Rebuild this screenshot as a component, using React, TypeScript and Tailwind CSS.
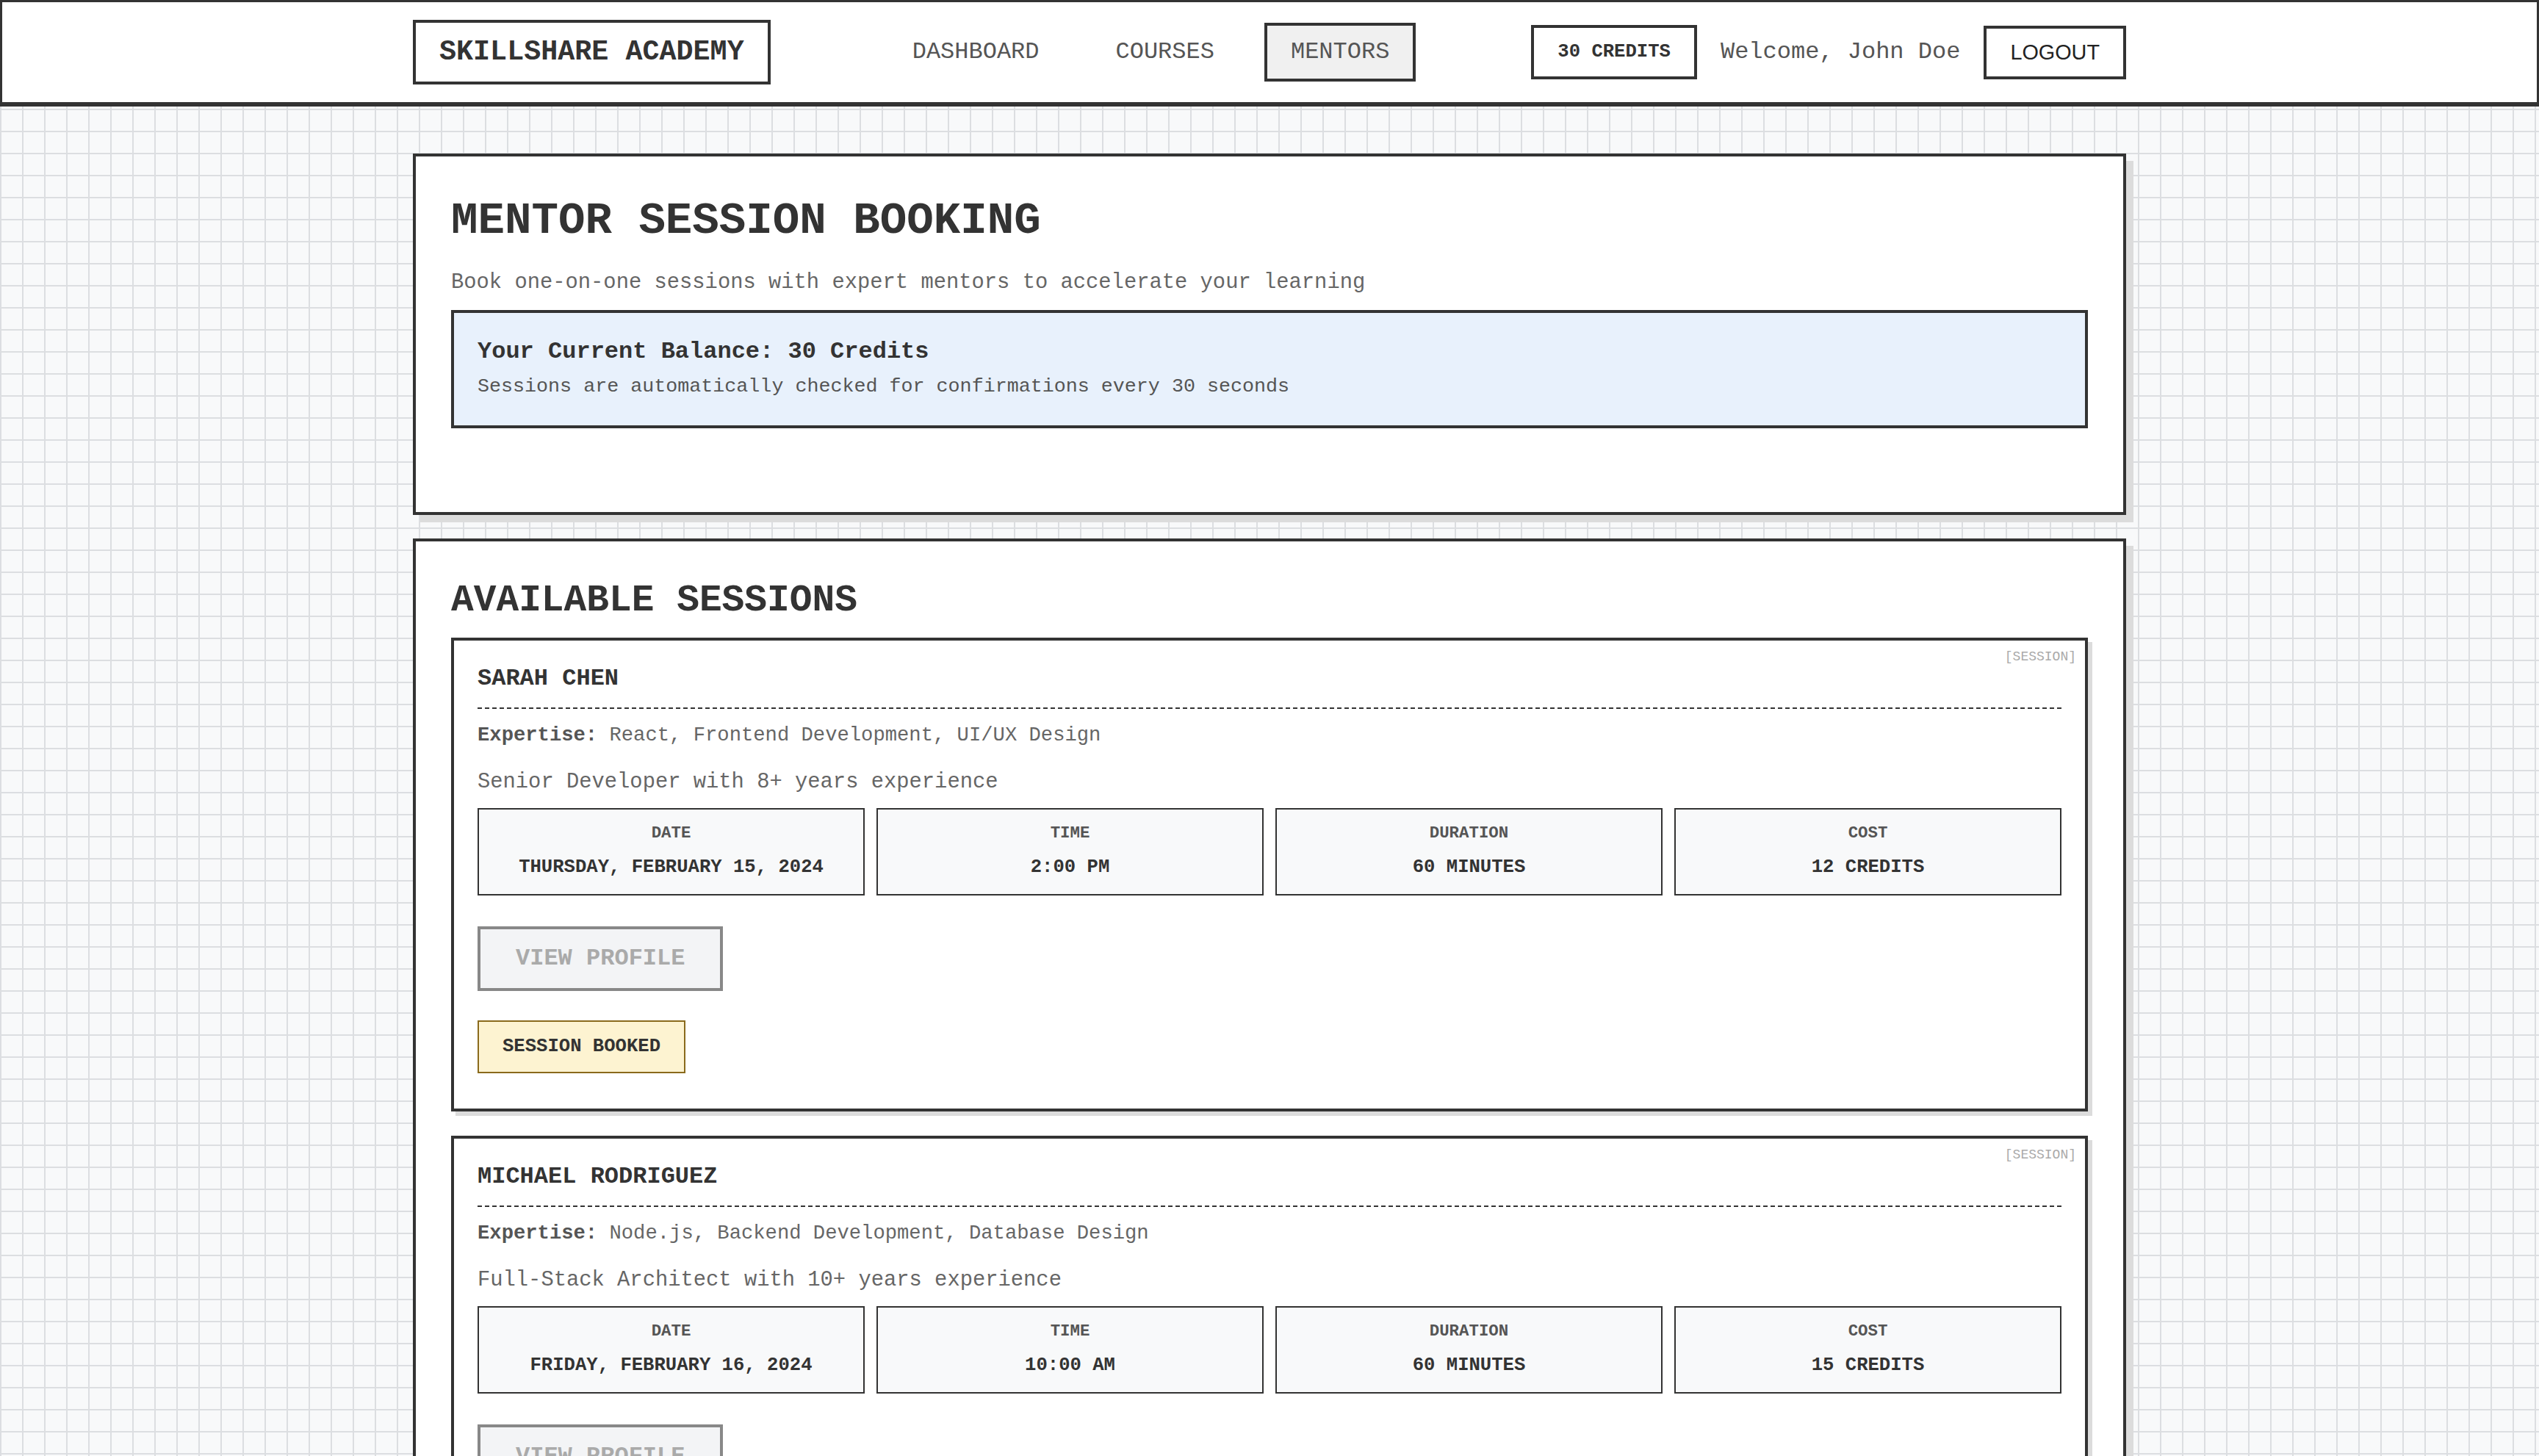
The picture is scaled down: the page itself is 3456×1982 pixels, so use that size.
const sessions = [
  {
    name: "SARAH CHEN",
    expertise: "React, Frontend Development, UI/UX Design",
    bio: "Senior Developer with 8+ years experience",
    date: "THURSDAY, FEBRUARY 15, 2024",
    time: "2:00 PM",
    duration: "60 MINUTES",
    cost: "12 CREDITS",
    booked: true,
  },
  {
    name: "MICHAEL RODRIGUEZ",
    expertise: "Node.js, Backend Development, Database Design",
    bio: "Full-Stack Architect with 10+ years experience",
    date: "FRIDAY, FEBRUARY 16, 2024",
    time: "10:00 AM",
    duration: "60 MINUTES",
    cost: "15 CREDITS",
    booked: false,
  },
]

function Detail({ label, value }: { label: string; value: string }) {
  return (
    <div className="h-[119px] border-2 border-[#333] bg-[#f8f9fa] pt-[18px] text-center">
      <div className="text-[22.4px] leading-[28px] font-bold text-[#555]">{label}</div>
      <div className="mt-[17px] text-[25.6px] leading-[32px] font-bold text-[#333]">{value}</div>
    </div>
  )
}

function SessionCard({ s }: { s: (typeof sessions)[number] }) {
  return (
    <div className="relative bg-white border-4 border-[#333] shadow-[6px_6px_0_#dcdcdc] px-[32px] pt-[32px] pb-[48px]">
      <span className="absolute top-[12px] right-[12px] text-[18px] leading-[20px] text-[#aaa]">[SESSION]</span>

      {/* Mentor header */}
      <div className="border-b-2 border-dashed border-[#333] pb-[19px]">
        <h3 className="text-[32px] leading-[40px] font-bold">{s.name}</h3>
      </div>
      <p className="mt-[17.5px] text-[27.2px] leading-[36px] text-[#666]">
        <span className="font-bold text-[#555]">Expertise:</span> {s.expertise}
      </p>
      <p className="mt-[26px] text-[28.8px] leading-[40px] text-[#666]">{s.bio}</p>

      {/* Session details */}
      <div className="mt-[15.5px] grid grid-cols-4 gap-[16px]">
        <Detail label="DATE" value={s.date} />
        <Detail label="TIME" value={s.time} />
        <Detail label="DURATION" value={s.duration} />
        <Detail label="COST" value={s.cost} />
      </div>

      <div className="mt-[42px]">
        <button className="h-[88px] px-[48px] border-4 border-[#888] bg-[#f3f4f6] text-[#aaa] text-[32px] leading-[40px] font-bold">
          VIEW PROFILE
        </button>
      </div>

      {s.booked ? (
        <div className="mt-[40px] inline-flex h-[72px] items-center px-[32px] border-2 border-[#8a6a1c] bg-[#fdf3d1] text-[25.6px] leading-[32px] font-bold">
          SESSION BOOKED
        </div>
      ) : (
        <div className="mt-[40px]">
          <button className="h-[88px] px-[48px] border-4 border-[#333] bg-white text-[#333] text-[32px] leading-[40px] font-bold">
            BOOK SESSION
          </button>
        </div>
      )}
    </div>
  )
}

export default function App() {
  return (
    <div className="min-h-screen bg-[#f8f9fa] bg-[linear-gradient(to_right,#dcdee1_2px,transparent_2px),linear-gradient(to_bottom,#dcdee1_2px,transparent_2px)] bg-[size:30px_30px] bg-[position:0_-2px] font-['Liberation_Mono','Courier_New',monospace] text-[#333]">
      {/* Header */}
      <header className="h-[145px] bg-white border-[3px] border-b-[6px] border-[#333]">
        <div className="w-[2332px] h-full mx-auto flex items-center justify-between">
          <div className="border-4 border-[#333] px-[32px] py-[20px] text-[38.4px] leading-[40px] font-bold">
            SKILLSHARE ACADEMY
          </div>

          <nav className="flex items-center gap-[32px] text-[32px] leading-[40px] text-[#555]">
            <a className="px-[32px] py-[16px] border-4 border-transparent">DASHBOARD</a>
            <a className="px-[32px] py-[16px] border-4 border-transparent">COURSES</a>
            <a className="px-[32px] py-[16px] border-4 border-[#333] bg-[#f0f0f0]">MENTORS</a>
          </nav>

          <div className="flex items-center gap-[32px]">
            <div className="border-4 border-[#333] px-[32px] py-[17px] text-[25.6px] leading-[32px] font-bold">
              30 CREDITS
            </div>
            <span className="text-[32px] leading-[40px] text-[#555]">Welcome, John Doe</span>
            <button className="border-4 border-[#333] bg-white px-[32px] py-[16px] font-['Liberation_Sans',Arial,sans-serif] text-[28.8px] leading-[33px] text-[#222]">
              LOGOUT
            </button>
          </div>
        </div>
      </header>

      <main className="w-[2332px] mx-auto pt-[64px] pb-[64px] flex flex-col gap-[32px]">
        {/* Booking intro */}
        <section className="bg-white border-4 border-[#333] shadow-[10px_10px_0_#dcdcdc] px-[48px] pt-[52px] pb-[48px]">
          <h1 className="text-[60.8px] leading-[72px] font-bold">MENTOR SESSION BOOKING</h1>
          <p className="mt-[28px] text-[28.8px] leading-[40px] text-[#666]">
            Book one-on-one sessions with expert mentors to accelerate your learning
          </p>
          <div className="mt-[17px] mb-[66px] h-[161px] border-4 border-[#333] bg-[#e8f1fc] px-[32px] pt-[32.5px]">
            <div className="text-[32px] leading-[40px] font-bold">Your Current Balance: 30 Credits</div>
            <div className="mt-[9.5px] text-[26.7px] leading-[36px] text-[#555]">
              Sessions are automatically checked for confirmations every 30 seconds
            </div>
          </div>
        </section>

        {/* Available sessions */}
        <section className="bg-white border-4 border-[#333] shadow-[10px_10px_0_#dcdcdc] px-[48px] pt-[50px] pb-[48px]">
          <h2 className="text-[51.2px] leading-[60px] font-bold">AVAILABLE SESSIONS</h2>
          <div className="mt-[21px] flex flex-col gap-[33px]">
            {sessions.map((s) => (
              <SessionCard key={s.name} s={s} />
            ))}
          </div>
        </section>
      </main>
    </div>
  )
}
